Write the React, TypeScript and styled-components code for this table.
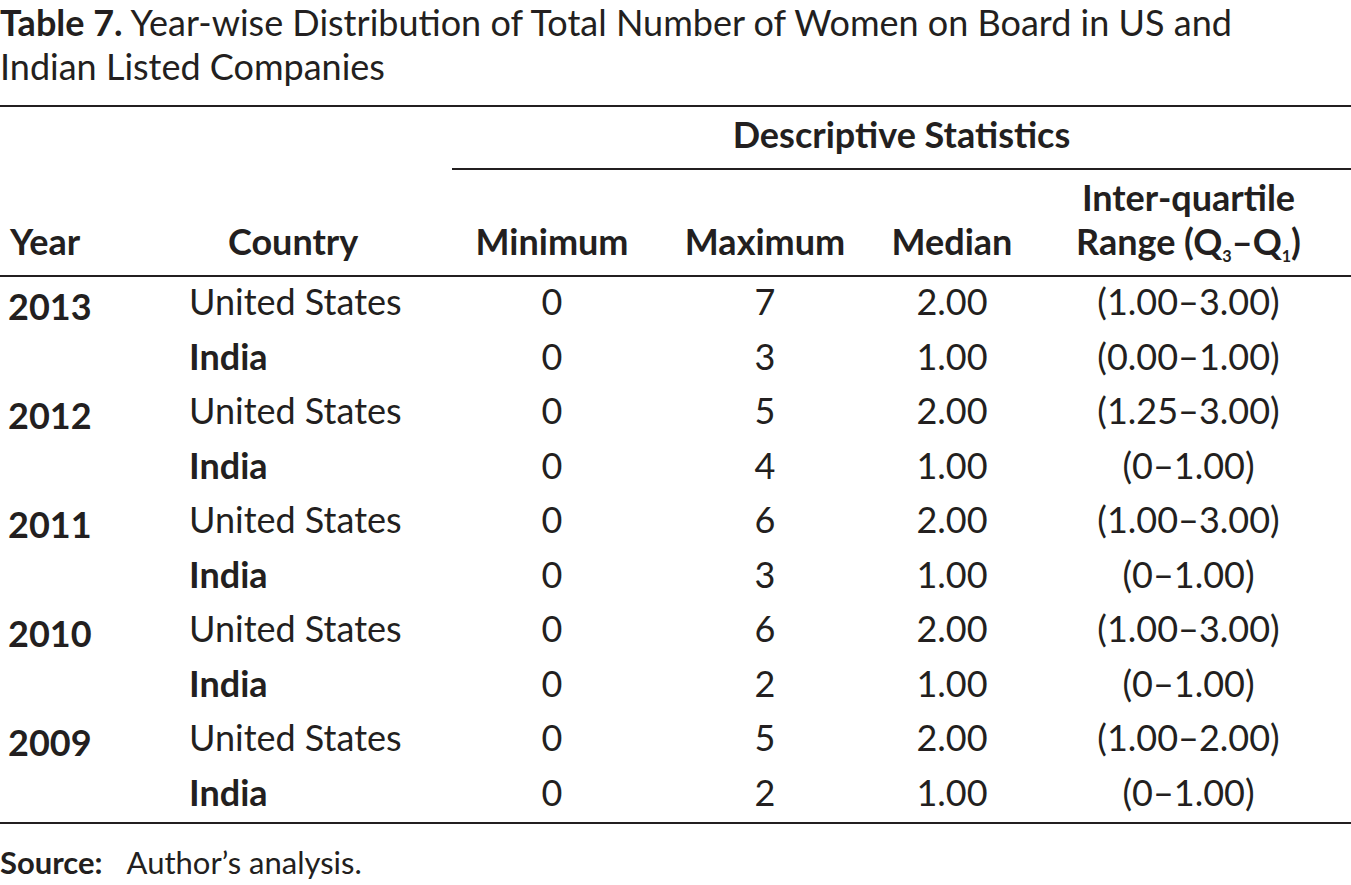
import styled, { createGlobalStyle } from "styled-components";

const GlobalStyle = createGlobalStyle`
  html, body {
    margin: 0;
    padding: 0;
    background: #ffffff;
  }
  body {
    font-family: Lato, "Open Sans", "Liberation Sans", sans-serif;
    color: #231f20;
  }
`;

const Page = styled.div`
  width: 1351px;
  height: 885px;
  overflow: hidden;
`;

const Caption = styled.div`
  font-size: 36px;
  line-height: 44px;
  margin: 0 0 17px;
  white-space: nowrap;

  & b {
    font-weight: 700;
  }
`;

const Table = styled.table`
  width: 1351px;
  table-layout: fixed;
  border-collapse: separate;
  border-spacing: 0;
  border-top: 2px solid #231f20;
  border-bottom: 2px solid #231f20;
  font-size: 36px;
`;

const HeadCell = styled.th<{ $align?: "left" | "center"; $indent?: number; $rule?: boolean }>`
  font-weight: 700;
  line-height: 44px;
  vertical-align: bottom;
  text-align: ${(p) => p.$align ?? "center"};
  padding: 5px 0 12px ${(p) => p.$indent ?? 0}px;
  border-bottom: ${(p) => (p.$rule ? "2px solid #231f20" : "none")};
  white-space: nowrap;
`;

const HeadRow = styled.tr<{ $rule?: boolean }>`
  & > th {
    border-bottom: ${(p) => (p.$rule ? "2px solid #231f20" : "none")};
  }
`;

const Cell = styled.td<{ $align?: "left" | "center"; $indent?: number; $bold?: boolean; $drop?: number }>`
  font-weight: ${(p) => (p.$bold ? 700 : 400)};
  line-height: 40px;
  height: 40px;
  padding: ${(p) => 4 + (p.$drop ?? 0)}px 0 ${(p) => 10.5 - (p.$drop ?? 0)}px ${(p) => p.$indent ?? 0}px;
  text-align: ${(p) => p.$align ?? "center"};
  vertical-align: top;
  white-space: nowrap;
`;

const Sub = styled.sub`
  font-size: 0.45em;
  line-height: 0;
  vertical-align: -0.45em;
  font-weight: 700;
`;

const Source = styled.p`
  margin: 20px 0 0;
  font-size: 31px;
  line-height: 36px;

  & b {
    font-weight: 700;
    margin-right: 24px;
  }
`;

type Row = { country: string; min: number; max: number; median: string; iqr: string };

const years: { year: string; rows: Row[] }[] = [
  {
    year: "2013",
    rows: [
      { country: "United States", min: 0, max: 7, median: "2.00", iqr: "(1.00–3.00)" },
      { country: "India", min: 0, max: 3, median: "1.00", iqr: "(0.00–1.00)" },
    ],
  },
  {
    year: "2012",
    rows: [
      { country: "United States", min: 0, max: 5, median: "2.00", iqr: "(1.25–3.00)" },
      { country: "India", min: 0, max: 4, median: "1.00", iqr: "(0–1.00)" },
    ],
  },
  {
    year: "2011",
    rows: [
      { country: "United States", min: 0, max: 6, median: "2.00", iqr: "(1.00–3.00)" },
      { country: "India", min: 0, max: 3, median: "1.00", iqr: "(0–1.00)" },
    ],
  },
  {
    year: "2010",
    rows: [
      { country: "United States", min: 0, max: 6, median: "2.00", iqr: "(1.00–3.00)" },
      { country: "India", min: 0, max: 2, median: "1.00", iqr: "(0–1.00)" },
    ],
  },
  {
    year: "2009",
    rows: [
      { country: "United States", min: 0, max: 5, median: "2.00", iqr: "(1.00–2.00)" },
      { country: "India", min: 0, max: 2, median: "1.00", iqr: "(0–1.00)" },
    ],
  },
];

export default function App() {
  return (
    <Page>
      <GlobalStyle />
      <Caption>
        <b>Table 7.</b> Year-wise Distribution of Total Number of Women on Board in US and
        <br />
        Indian Listed Companies
      </Caption>
      <Table>
        <colgroup>
          <col style={{ width: 178 }} />
          <col style={{ width: 274 }} />
          <col style={{ width: 200 }} />
          <col style={{ width: 226 }} />
          <col style={{ width: 148 }} />
          <col style={{ width: 325 }} />
        </colgroup>
        <thead>
          <tr>
            <HeadCell />
            <HeadCell />
            <HeadCell colSpan={4} $rule>
              Descriptive Statistics
            </HeadCell>
          </tr>
          <HeadRow $rule>
            <HeadCell $align="left" $indent={10}>Year</HeadCell>
            <HeadCell $align="left" $indent={50}>Country</HeadCell>
            <HeadCell>Minimum</HeadCell>
            <HeadCell>Maximum</HeadCell>
            <HeadCell>Median</HeadCell>
            <HeadCell>
              Inter-quartile
              <br />
              Range (Q<Sub>3</Sub>–Q<Sub>1</Sub>)
            </HeadCell>
          </HeadRow>
        </thead>
        <tbody>
          {years.map((group) =>
            group.rows.map((row, idx) => (
              <tr key={group.year + row.country}>
                <Cell $align="left" $indent={8} $bold $drop={5}>
                  {idx === 0 ? group.year : ""}
                </Cell>
                <Cell $align="left" $indent={11} $bold={row.country === "India"}>
                  {row.country}
                </Cell>
                <Cell>{row.min}</Cell>
                <Cell>{row.max}</Cell>
                <Cell>{row.median}</Cell>
                <Cell>{row.iqr}</Cell>
              </tr>
            ))
          )}
        </tbody>
      </Table>
      <Source>
        <b>Source:</b>Author’s analysis.
      </Source>
    </Page>
  );
}
